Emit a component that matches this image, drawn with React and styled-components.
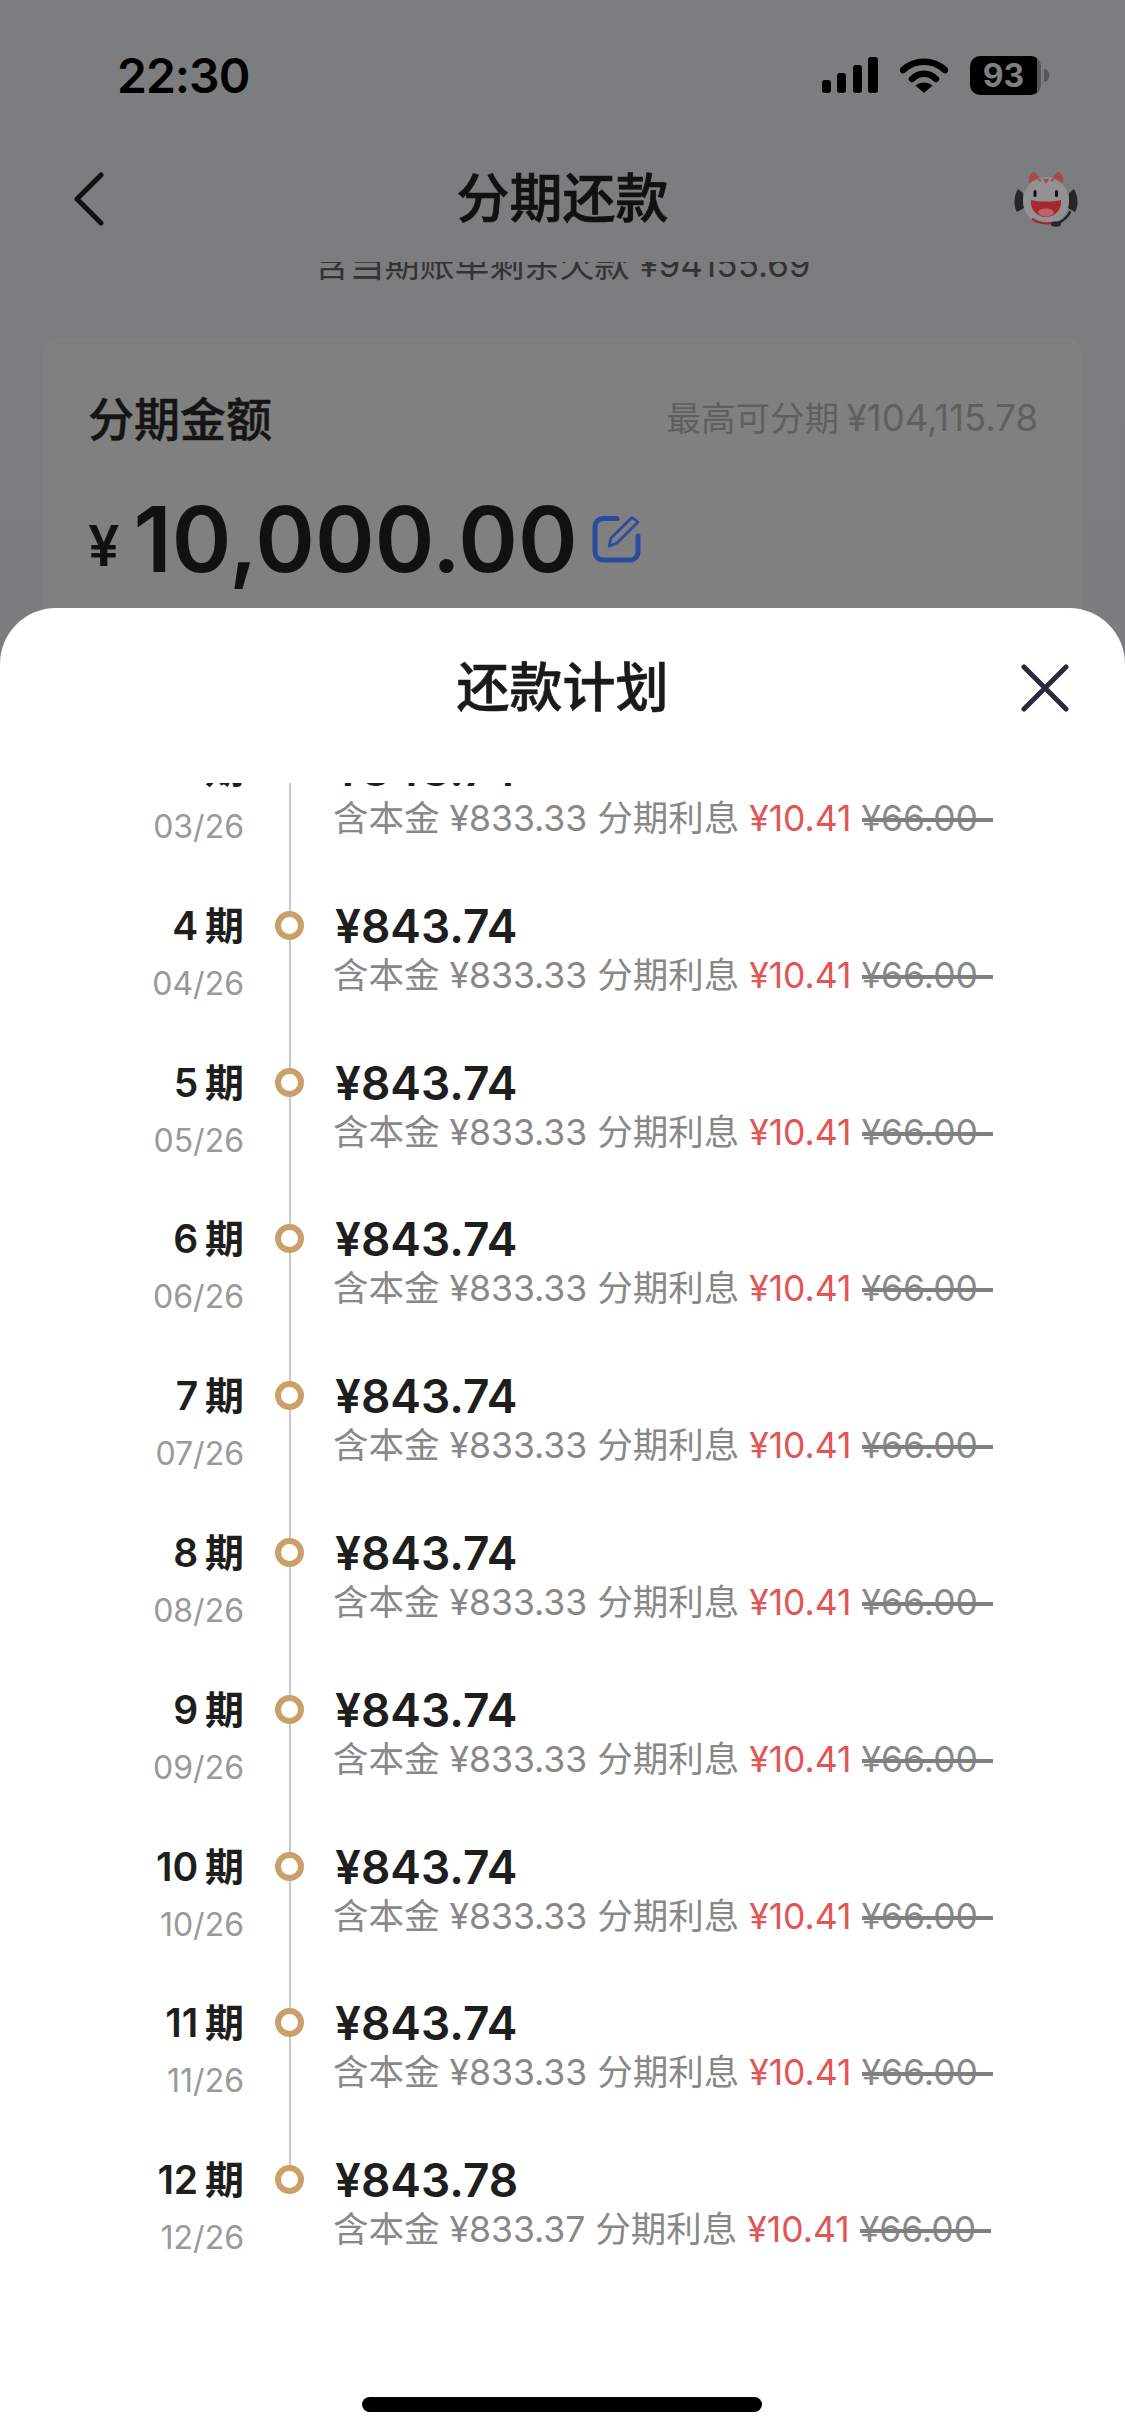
import styled, { createGlobalStyle } from "styled-components";

const GlobalStyle = createGlobalStyle`
    html, body {
        margin: 0;
        padding: 0;
        background: #7c7d7f;
    }
    * {
        box-sizing: border-box;
    }
`

const FONT = `Inter, "Noto Sans CJK SC", sans-serif`

const rows = [
    { no: 3, date: "03/26", amount: "843.74", principal: "833.33" },
    { no: 4, date: "04/26", amount: "843.74", principal: "833.33" },
    { no: 5, date: "05/26", amount: "843.74", principal: "833.33" },
    { no: 6, date: "06/26", amount: "843.74", principal: "833.33" },
    { no: 7, date: "07/26", amount: "843.74", principal: "833.33" },
    { no: 8, date: "08/26", amount: "843.74", principal: "833.33" },
    { no: 9, date: "09/26", amount: "843.74", principal: "833.33" },
    { no: 10, date: "10/26", amount: "843.74", principal: "833.33" },
    { no: 11, date: "11/26", amount: "843.74", principal: "833.33" },
    { no: 12, date: "12/26", amount: "843.78", principal: "833.37" },
]

const SignalIcon = () => (
    <svg width="56" height="36" viewBox="0 0 56 36">
        <rect x="0" y="23" width="9" height="13" rx="3" fill="#000" />
        <rect x="15" y="16" width="9" height="20" rx="3" fill="#000" />
        <rect x="31" y="8" width="9" height="28" rx="3" fill="#000" />
        <rect x="46" y="0" width="10" height="36" rx="3" fill="#000" />
    </svg>
)

const WifiIcon = () => (
    <svg width="48" height="36" viewBox="0 0 48 36">
        <path d="M3 13 C15 2 33 2 45 13" fill="none" stroke="#000" strokeWidth="6.5" strokeLinecap="round" />
        <path d="M12 22 C19 15 29 15 36 22" fill="none" stroke="#000" strokeWidth="6.5" strokeLinecap="round" />
        <path d="M15.5 28.5 C20 24.5 28 24.5 32.5 28.5 L24 36 Z" fill="#000" />
    </svg>
)

const BackIcon = () => (
    <svg width="30" height="54" viewBox="0 0 30 54">
        <path d="M27 3 L3 27 L27 51" fill="none" stroke="#111" strokeWidth="5" strokeLinecap="round" strokeLinejoin="round" />
    </svg>
)

const CloseIcon = () => (
    <svg width="48" height="48" viewBox="0 0 48 48">
        <path d="M3 3 L45 45 M45 3 L3 45" fill="none" stroke="#2a2a3c" strokeWidth="5" strokeLinecap="round" />
    </svg>
)

const EditIcon = () => (
    <svg width="49" height="48" viewBox="0 0 49 48">
        <path d="M25 3.5 H11 a8 8 0 0 0 -8 8 V37 a8 8 0 0 0 8 8 H38 a8 8 0 0 0 8 -8 V21" fill="none" stroke="#2a4b9e" strokeWidth="5" strokeLinecap="round" />
        <path d="M17 31 L19 23 L40 2.5 L46 7 L25 28 Z" fill="none" stroke="#2a4b9e" strokeWidth="2.6" strokeLinejoin="round" />
    </svg>
)

const MascotIcon = () => (
    <svg width="64" height="55" viewBox="0 0 64 55">
        <path d="M4 17 C0 24 -1 33 3 40 L10 36 L9 21 Z" fill="#26262a" />
        <path d="M60 17 C64 24 65 33 61 40 L54 36 L55 21 Z" fill="#26262a" />
        <ellipse cx="32" cy="29" rx="23" ry="24" fill="#929294" />
        <path d="M15 11 C14 5 17 0 20 0 C22 1 24 4 25 6 Z" fill="#a8474f" />
        <path d="M49 11 C50 5 47 0 44 0 C42 1 40 4 39 6 Z" fill="#a8474f" />
        <path d="M29 7 L35 7 L32 12 Z" fill="#a8474f" />
        <path d="M24 7 L27 9 M40 7 L37 9" fill="none" stroke="#a8474f" strokeWidth="2" />
        <rect x="19.5" y="18" width="3" height="7" rx="1.5" fill="#111" />
        <rect x="41" y="18" width="3" height="7" rx="1.5" fill="#111" />
        <path d="M17 28 C26 30 38 30 47 28 C48 38 41 45 32 45 C23 45 16 38 17 28 Z" fill="#a52a30" />
        <ellipse cx="32" cy="40.5" rx="8" ry="4" fill="#b8656c" />
        <path d="M18 47 C24 51 32 52 39 51" fill="none" stroke="#a52a30" strokeWidth="2.5" />
        <path d="M56 40 C53 46 49 49 44 51" fill="none" stroke="#26262a" strokeWidth="2.5" strokeLinecap="round" />
        <ellipse cx="42" cy="52" rx="5" ry="2.8" fill="#26262a" />
    </svg>
)

const Row = ({ no, date, amount, principal, last }) => (
    <PlanRow>
        <Term>
            <TermNo>{no} 期</TermNo>
            <TermDate>{date}</TermDate>
        </Term>
        <Axis $last={last}>
            <Ring />
        </Axis>
        <Detail>
            <Amount>¥{amount}</Amount>
            <Breakdown>
                含本金 ¥{principal} 分期利息 <Rate>¥10.41</Rate> <OldRate>¥66.00</OldRate>
            </Breakdown>
        </Detail>
    </PlanRow>
)

const App = () => {
    return (
        <Screen>
            <GlobalStyle />

            <StatusBar>
                <Clock>22:30</Clock>
                <StatusIcons>
                    <SignalIcon />
                    <WifiIcon />
                    <Battery>
                        <BatteryBody>93</BatteryBody>
                        <BatteryCap />
                    </Battery>
                </StatusIcons>
            </StatusBar>

            <NavBar>
                <NavBack><BackIcon /></NavBack>
                <NavTitle>分期还款</NavTitle>
                <NavService><MascotIcon /></NavService>
            </NavBar>

            <PageBody>
                <DebtNote>含当期账单剩余欠款 ¥94155.69</DebtNote>
                <AmountCard>
                    <CardHead>
                        <CardTitle>分期金额</CardTitle>
                        <CardLimit>最高可分期 <LimitValue>¥104,115.78</LimitValue></CardLimit>
                    </CardHead>
                    <CardValue>
                        <Currency>¥</Currency>
                        <BigNumber>10,000.00</BigNumber>
                        <EditButton><EditIcon /></EditButton>
                    </CardValue>
                </AmountCard>
            </PageBody>

            <Sheet>
                <SheetHead>
                    <span />
                    <SheetTitle>还款计划</SheetTitle>
                    <SheetClose><CloseIcon /></SheetClose>
                </SheetHead>
                <PlanViewport>
                    <PlanList>
                        {rows.map((r, i) => (
                            <Row key={r.no} {...r} last={i === rows.length - 1} />
                        ))}
                    </PlanList>
                </PlanViewport>
                <HomeBar />
            </Sheet>
        </Screen>
    );
}

const Screen = styled.div`
    position: relative;
    width: 1125px;
    height: 2435px;
    overflow: hidden;
    display: flex;
    flex-direction: column;
    background: linear-gradient(180deg, #7c7d7f 0%, #7a7b7e 100%);
    font-family: ${FONT};
    color: #111;
`

const StatusBar = styled.div`
    height: 150px;
    flex: none;
    display: flex;
    align-items: center;
    justify-content: space-between;
    padding: 0 76px 0 117px;
`

const Clock = styled.div`
    font-size: 48px;
    font-weight: 600;
    letter-spacing: -1px;
    color: #000;
`

const StatusIcons = styled.div`
    display: flex;
    align-items: center;
    gap: 22px;
`

const Battery = styled.div`
    display: flex;
    align-items: center;
    gap: 3px;
`

const BatteryBody = styled.div`
    width: 71px;
    height: 39px;
    border-radius: 10px;
    background: linear-gradient(90deg, #000 0 94%, #555658 94% 100%);
    color: #7f8082;
    font-size: 32px;
    font-weight: 700;
    line-height: 39px;
    text-align: center;
    padding-right: 4px;
`

const BatteryCap = styled.div`
    width: 5px;
    height: 13px;
    border-radius: 0 5px 5px 0;
    background: #555658;
`

const NavBar = styled.div`
    height: 112px;
    flex: none;
    display: grid;
    grid-template-columns: 1fr auto 1fr;
    align-items: center;
    padding: 0 47px 14px 47px;
`

const NavBack = styled.div`
    display: flex;
    padding-left: 27px;
`

const NavTitle = styled.div`
    font-size: 53px;
    font-weight: 500;
    -webkit-text-stroke: 0.7px #111;
    line-height: 60px;
    color: #111;
`

const NavService = styled.div`
    display: flex;
    justify-content: flex-end;
`

const PageBody = styled.div`
    flex: 1;
    overflow: hidden;
`

const DebtNote = styled.div`
    margin-top: -15px;
    text-align: center;
    font-size: 35px;
    line-height: 34px;
    color: #333;
`

const AmountCard = styled.div`
    margin: 57px 44px 0 43px;
    height: 500px;
    padding: 52px 43px 0 45px;
    border-radius: 14px;
    background: #808080;
`

const CardHead = styled.div`
    display: flex;
    align-items: center;
    justify-content: space-between;
`

const CardTitle = styled.div`
    font-size: 46px;
    font-weight: 500;
    -webkit-text-stroke: 0.5px #151515;
    line-height: 56px;
    color: #151515;
`

const CardLimit = styled.div`
    font-size: 34.5px;
    line-height: 56px;
    word-spacing: -2px;
    color: #5f5f5f;
`

const LimitValue = styled.span`
    font-size: 36.5px;
`

const CardValue = styled.div`
    display: flex;
    align-items: center;
    margin-top: 42px;
    height: 100px;
`

const Currency = styled.span`
    font-size: 56px;
    font-weight: 600;
    margin: 14px 14px 0 0;
    color: #111;
`

const BigNumber = styled.span`
    font-size: 90.5px;
    font-weight: 600;
    line-height: 100px;
    color: #111;
`

const EditButton = styled.span`
    display: flex;
    margin-left: 14px;
`

const Sheet = styled.div`
    position: absolute;
    left: 0;
    right: 0;
    top: 608px;
    bottom: 0;
    display: flex;
    flex-direction: column;
    background: #fff;
    border-radius: 56px 56px 0 0;
`

const SheetHead = styled.div`
    height: 175px;
    flex: none;
    display: grid;
    grid-template-columns: 1fr auto 1fr;
    align-items: start;
    padding: 50px 56px 0 56px;
`

const SheetTitle = styled.div`
    font-size: 53px;
    font-weight: 500;
    -webkit-text-stroke: 0.6px #1a1a1a;
    line-height: 60px;
    color: #1a1a1a;
`

const SheetClose = styled.div`
    display: flex;
    justify-content: flex-end;
    padding-top: 6px;
`

const PlanViewport = styled.div`
    height: 1600px;
    flex: none;
    overflow: hidden;
`

const PlanList = styled.div`
    margin-top: -36px;
`

const PlanRow = styled.div`
    height: 156.8px;
    display: grid;
    grid-template-columns: 244px 29px 1fr;
    column-gap: 31px;
`

const Term = styled.div`
    display: flex;
    flex-direction: column;
    align-items: flex-end;
`

const TermNo = styled.div`
    font-size: 39px;
    font-weight: 600;
    line-height: 44px;
    word-spacing: -3px;
    color: #1e1e1e;
`

const TermDate = styled.div`
    margin-top: 16px;
    font-size: 32px;
    line-height: 40px;
    color: #999;
`

const Axis = styled.div`
    padding-top: 7px;
    background: linear-gradient(#c9c9c9, #c9c9c9) center top / 2px ${(p) => (p.$last ? "10px" : "100%")} no-repeat;
`

const Ring = styled.div`
    width: 29px;
    height: 29px;
    border-radius: 50%;
    border: 6px solid #c9a06a;
    background: #fff;
`

const Detail = styled.div`
    display: flex;
    flex-direction: column;
`

const Amount = styled.div`
    font-size: 46px;
    font-weight: 600;
    line-height: 44px;
    color: #1e1e1e;
`

const Breakdown = styled.div`
    margin: 6px 0 0 -2px;
    font-size: 35.5px;
    line-height: 44px;
    color: #888;
    white-space: nowrap;
`

const Rate = styled.span`
    color: #e25555;
`

const OldRate = styled.span`
    position: relative;

    &::after {
        content: "";
        position: absolute;
        left: 0;
        right: -15px;
        top: 21px;
        height: 4px;
        background: #808080;
    }
`

const HomeBar = styled.div`
    position: absolute;
    left: 362px;
    bottom: 23px;
    width: 400px;
    height: 15px;
    border-radius: 8px;
    background: #000;
`

export default App;
